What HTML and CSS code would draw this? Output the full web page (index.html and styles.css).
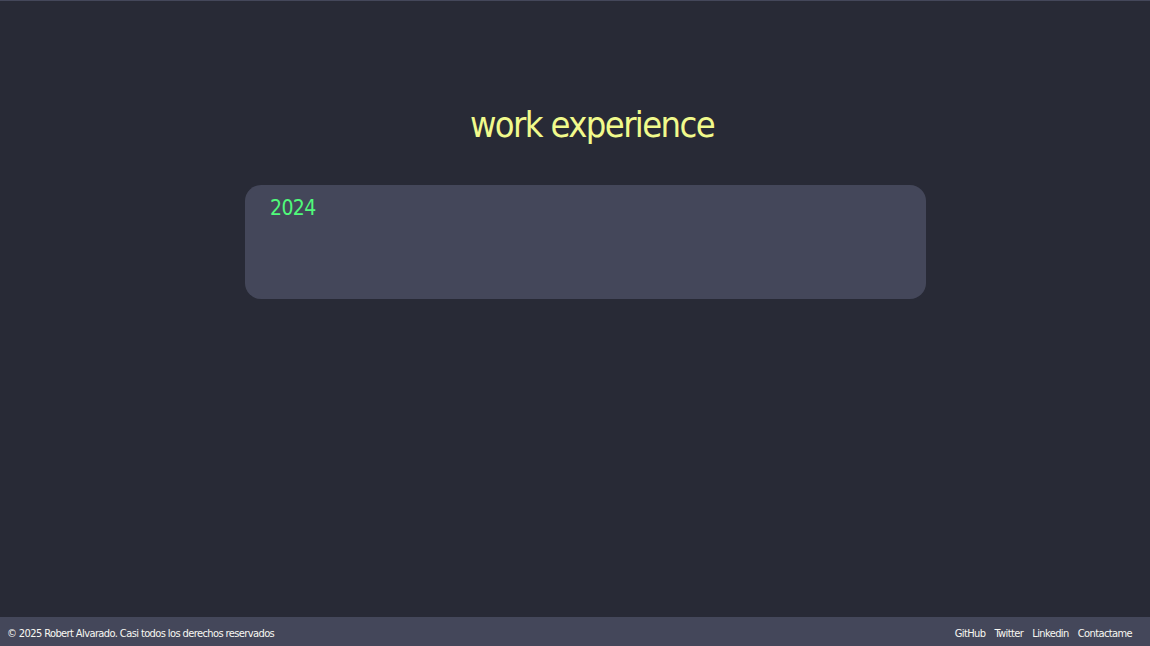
FILE: index.html
```html
<!DOCTYPE html>
<html lang="es">
<head>
    <meta charset="UTF-8">
    <meta name="viewport" content="width=device-width, initial-scale=1.0">
    <title>Robert Alvarado - work experience</title>
    <link rel="stylesheet" href="styles.css">
</head>
<body>
    <main class="page">
        <h1 class="title">work experience</h1>

        <section class="job-card">
            <span class="job-year">2024</span>
        </section>
    </main>

    <footer class="footer">
        <p class="copy">&copy; 2025 Robert Alvarado. Casi todos los derechos reservados</p>
        <nav class="footer-links">
            <a href="#">GitHub</a>
            <a href="#">Twitter</a>
            <a href="#">Linkedin</a>
            <a href="#">Contactame</a>
        </nav>
    </footer>
</body>
</html>
```

FILE: styles.css
```css
html, body {
    height: 100%;
}

body {
    margin: 0;
    display: flex;
    flex-direction: column;
    background-color: #282a36;
    border-top: 1px solid #44475a;
    box-sizing: border-box;
    font-family: 'Liberation Sans Narrow', 'DejaVu Sans Condensed', Arial, sans-serif;
    color: #f8f8f2;
}

.page {
    flex: 1;
    display: flex;
    flex-direction: column;
    align-items: center;
    padding-left: 21px;
}

.title {
    margin: 101px 0 37px;
    padding-left: 13px;
    font-size: 36px;
    font-weight: 400;
    letter-spacing: -1.6px;
    line-height: 46px;
    color: #f1fa8c;
}

.job-card {
    width: 681px;
    height: 114px;
    padding: 11px 25px;
    box-sizing: border-box;
    background-color: #44475a;
    border-radius: 16px;
}

.job-year {
    font-size: 21px;
    letter-spacing: -0.6px;
    color: #50fa7b;
}

.footer {
    height: 29px;
    padding: 3px 18px 0 7px;
    box-sizing: border-box;
    display: flex;
    align-items: center;
    justify-content: space-between;
    background-color: #44475a;
    font-size: 11px;
    letter-spacing: -0.6px;
}

.copy {
    margin: 0;
}

.footer-links {
    display: flex;
    gap: 9px;
}

.footer-links a {
    color: #f8f8f2;
    text-decoration: none;
}
```
